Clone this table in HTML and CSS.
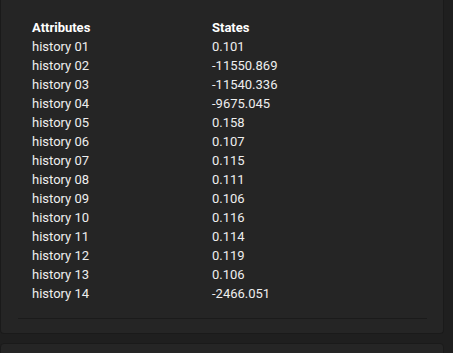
FILE: index.html
```html
<!DOCTYPE html>
<html>
<head>
<meta charset="utf-8">
<link rel="stylesheet" href="styles.css">
</head>
<body>
<div class="page">
  <section class="card card-main">
    <table class="attrs">
      <thead>
        <tr><th>Attributes</th><th>States</th></tr>
      </thead>
      <tbody>
        <tr><td>history 01</td><td>0.101</td></tr>
        <tr><td>history 02</td><td>-11550.869</td></tr>
        <tr><td>history 03</td><td>-11540.336</td></tr>
        <tr><td>history 04</td><td>-9675.045</td></tr>
        <tr><td>history 05</td><td>0.158</td></tr>
        <tr><td>history 06</td><td>0.107</td></tr>
        <tr><td>history 07</td><td>0.115</td></tr>
        <tr><td>history 08</td><td>0.111</td></tr>
        <tr><td>history 09</td><td>0.106</td></tr>
        <tr><td>history 10</td><td>0.116</td></tr>
        <tr><td>history 11</td><td>0.114</td></tr>
        <tr><td>history 12</td><td>0.119</td></tr>
        <tr><td>history 13</td><td>0.106</td></tr>
        <tr><td>history 14</td><td>-2466.051</td></tr>
      </tbody>
    </table>
    <div class="divider"></div>
  </section>
  <section class="card card-next"></section>
</div>
</body>
</html>
```
FILE: styles.css
```css
html, body {
  margin: 0;
  padding: 0;
  background: #1f1f1f;
  font-family: Roboto, "Liberation Sans", sans-serif;
  overflow: hidden;
}
.page {
  width: 444px;
  display: flex;
  flex-direction: column;
  gap: 9px;
}
.card {
  background: #252525;
  border: 1px solid #1a1a1a;
  border-radius: 4px;
}
.card-main {
  border-top: none;
  border-top-left-radius: 0;
  border-top-right-radius: 0;
  padding: 18px 16px 14px 16px;
}
.card-next {
  height: 20px;
}
.attrs {
  border-collapse: collapse;
  margin-left: 15px;
  font-size: 13px;
  color: #eeeeee;
}
.attrs th, .attrs td {
  padding: 0;
  height: 19px;
  text-align: left;
  vertical-align: middle;
  white-space: nowrap;
}
.attrs th {
  font-weight: 700;
  color: #ffffff;
}
.attrs th:first-child, .attrs td:first-child {
  width: 180px;
}
.divider {
  margin-top: 15px;
  margin-left: 1px;
  margin-right: 0;
  height: 1px;
  background: #1b1b1b;
}
```
